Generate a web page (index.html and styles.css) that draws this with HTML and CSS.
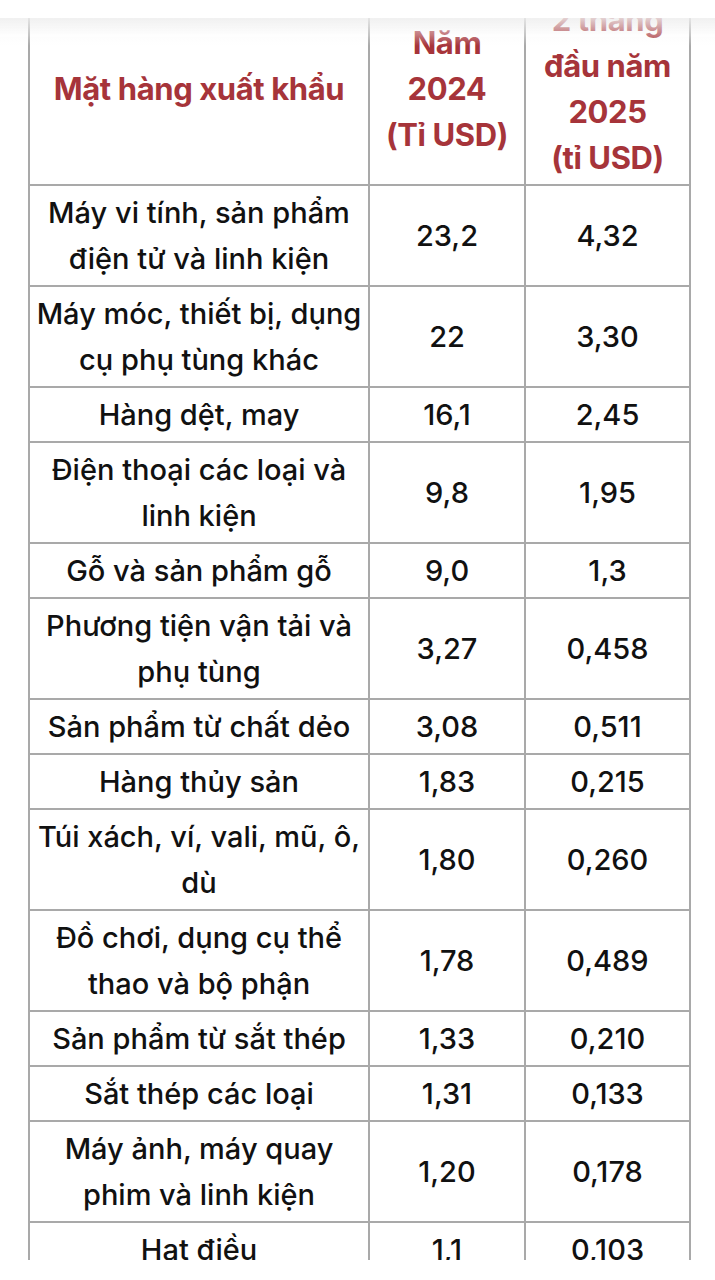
FILE: index.html
```html
<!DOCTYPE html>
<html lang="vi">
<head>
<meta charset="utf-8">
<title>Mặt hàng xuất khẩu</title>
<link rel="stylesheet" href="styles.css">
</head>
<body>
<div class="topbar"></div>
<main class="page">
<table class="data">
  <colgroup>
    <col class="c1"><col class="c2"><col class="c3">
  </colgroup>
  <thead>
    <tr>
      <th>Mặt hàng xuất khẩu</th>
      <th>Năm<br>2024<br>(Tỉ USD)</th>
      <th>2 tháng<br>đầu năm<br>2025<br>(tỉ USD)</th>
    </tr>
  </thead>
  <tbody>
    <tr><td>Máy vi tính, sản phẩm<br>điện tử và linh kiện</td><td>23,2</td><td>4,32</td></tr>
    <tr><td>Máy móc, thiết bị, dụng<br>cụ phụ tùng khác</td><td>22</td><td>3,30</td></tr>
    <tr><td>Hàng dệt, may</td><td>16,1</td><td>2,45</td></tr>
    <tr><td>Điện thoại các loại và<br>linh kiện</td><td>9,8</td><td>1,95</td></tr>
    <tr><td>Gỗ và sản phẩm gỗ</td><td>9,0</td><td>1,3</td></tr>
    <tr><td>Phương tiện vận tải và<br>phụ tùng</td><td>3,27</td><td>0,458</td></tr>
    <tr><td>Sản phẩm từ chất dẻo</td><td>3,08</td><td>0,511</td></tr>
    <tr><td>Hàng thủy sản</td><td>1,83</td><td>0,215</td></tr>
    <tr><td>Túi xách, ví, vali, mũ, ô,<br>dù</td><td>1,80</td><td>0,260</td></tr>
    <tr><td>Đồ chơi, dụng cụ thể<br>thao và bộ phận</td><td>1,78</td><td>0,489</td></tr>
    <tr><td>Sản phẩm từ sắt thép</td><td>1,33</td><td>0,210</td></tr>
    <tr><td>Sắt thép các loại</td><td>1,31</td><td>0,133</td></tr>
    <tr><td>Máy ảnh, máy quay<br>phim và linh kiện</td><td>1,20</td><td>0,178</td></tr>
    <tr><td>Hạt điều</td><td>1,1</td><td>0,103</td></tr>
  </tbody>
</table>
</main>
<div class="bottombar"></div>
</body>
</html>
```
FILE: styles.css
```css
html, body {
  margin: 0;
  padding: 0;
  background: #ffffff;
  overflow: hidden;
  height: 1280px;
}

.page {
  padding-left: 28px;
  margin-top: -9px;
}

.data {
  border-collapse: collapse;
  width: 661px;
  table-layout: fixed;
  font-family: Inter, "Liberation Sans", Arial, sans-serif;
  font-size: 29px;
  font-weight: 500;
  line-height: 46px;
  color: #111111;
}

.c1 { width: 340px; }
.c2 { width: 156px; }
.c3 { width: 165px; }

.data th,
.data td {
  border: 2px solid #a9a9a9;
  padding: 3.5px 0;
  text-align: center;
  vertical-align: middle;
  white-space: nowrap;
}

.data th {
  color: #a6343a;
  font-weight: 700;
  font-size: 31px;
  letter-spacing: -0.4px;
}

.topbar {
  position: fixed;
  top: 0;
  left: 0;
  right: 0;
  height: 18px;
  background: #ffffff;
  z-index: 2;
}

.topbar::after {
  content: "";
  position: absolute;
  left: 0;
  right: 0;
  top: 18px;
  height: 28px;
  background: linear-gradient(to bottom, rgba(238, 238, 238, 0.85), rgba(250, 250, 250, 0.35) 60%, rgba(255, 255, 255, 0));
}

.bottombar {
  position: fixed;
  left: 0;
  right: 0;
  bottom: 0;
  height: 20px;
  background: #ffffff;
  z-index: 2;
}
```
